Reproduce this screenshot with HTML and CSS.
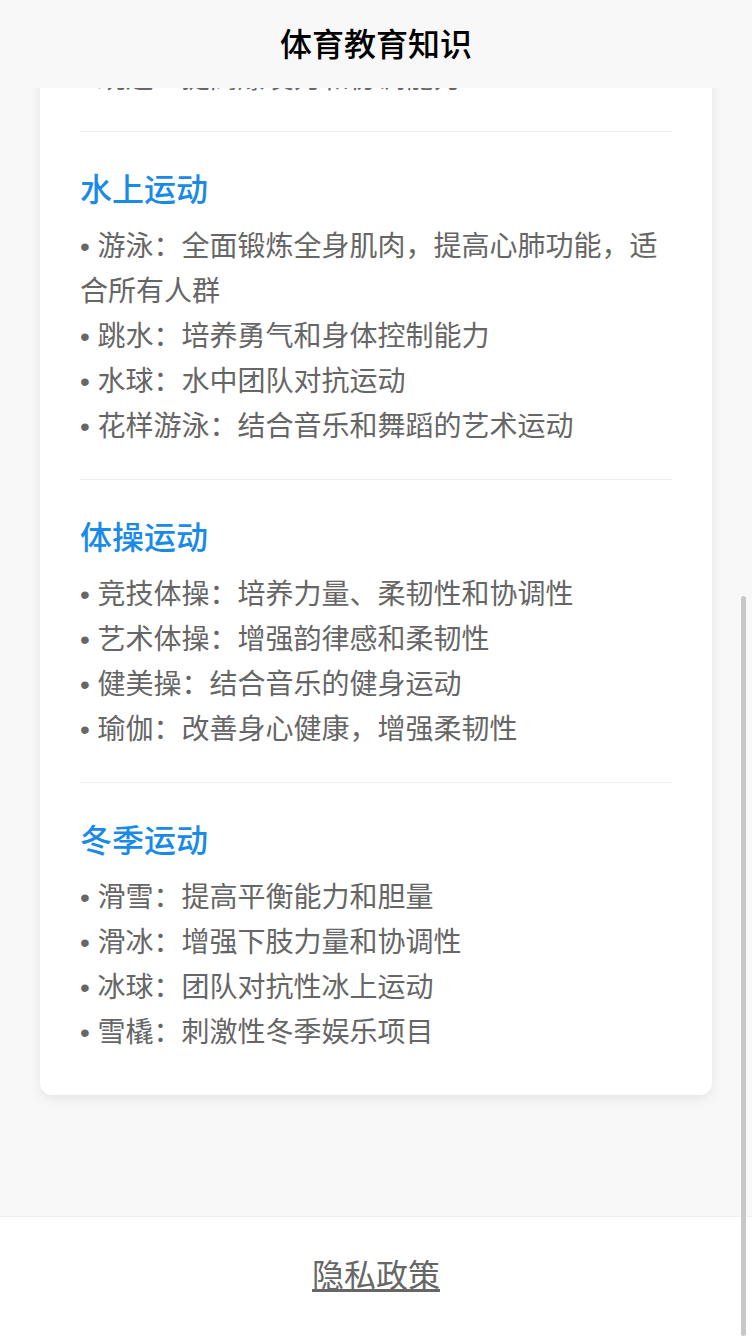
FILE: index.html
```html
<!DOCTYPE html>
<html lang="zh-CN">
<head>
  <meta charset="UTF-8">
  <meta name="viewport" content="width=device-width, initial-scale=1.0">
  <title>体育教育知识</title>
  <link rel="stylesheet" href="styles.css">
</head>
<body>

<div class="header">
  <h1>体育教育知识</h1>
</div>

<div class="main">
  <div class="card">
    <div class="section">
      <h3>球类运动</h3>
      <p>• 篮球：提高身体协调性和团队合作能力</p>
      <p>• 足球：增强心肺功能，培养团队精神和拼搏意识</p>
      <p>• 排球：提高反应速度和弹跳能力</p>
      <p>• 乒乓球：锻炼手眼协调能力，提高反应速度和灵敏性</p>
      <p>• 羽毛球：提高身体灵活性和耐力</p>
    </div>

    <div class="section">
      <h3>武术运动</h3>
      <p>• 太极拳：调节身心，增强平衡能力</p>
      <p>• 长拳：提高身体柔韧性和协调性</p>
      <p>• 散打：增强格斗技能和反应能力</p>
      <p>• 剑术：培养专注力和身体控制能力</p>
    </div>

    <div class="section">
      <h3>田径运动</h3>
      <p>• 短跑：提高速度和爆发力</p>
      <p>• 长跑：增强耐力和心肺功能，锻炼坚强的意志品质</p>
      <p>• 跳高：提高弹跳能力和身体协调性</p>
      <p>• 跳远：提高爆发力和协调能力</p>
    </div>

    <div class="section">
      <h3>水上运动</h3>
      <p>• 游泳：全面锻炼全身肌肉，提高心肺功能，适合所有人群</p>
      <p>• 跳水：培养勇气和身体控制能力</p>
      <p>• 水球：水中团队对抗运动</p>
      <p>• 花样游泳：结合音乐和舞蹈的艺术运动</p>
    </div>

    <div class="section">
      <h3>体操运动</h3>
      <p>• 竞技体操：培养力量、柔韧性和协调性</p>
      <p>• 艺术体操：增强韵律感和柔韧性</p>
      <p>• 健美操：结合音乐的健身运动</p>
      <p>• 瑜伽：改善身心健康，增强柔韧性</p>
    </div>

    <div class="section">
      <h3>冬季运动</h3>
      <p>• 滑雪：提高平衡能力和胆量</p>
      <p>• 滑冰：增强下肢力量和协调性</p>
      <p>• 冰球：团队对抗性冰上运动</p>
      <p>• 雪橇：刺激性冬季娱乐项目</p>
    </div>
  </div>
</div>

<div class="footer">
  <a href="#">隐私政策</a>
</div>

<div class="scroll-thumb" id="scroll-thumb"></div>

<script>
  function updateThumb() {
    const total = document.documentElement.scrollHeight;
    const view = window.innerHeight;
    const thumb = document.getElementById('scroll-thumb');
    const height = view * view / total;
    const top = total > view ? (view - height) * window.scrollY / (total - view) : 0;
    thumb.style.height = height + 'px';
    thumb.style.top = top + 'px';
  }

  function scrollToBottom() {
    window.scrollTo(0, document.documentElement.scrollHeight);
    updateThumb();
  }

  window.addEventListener('scroll', updateThumb);
  window.addEventListener('load', scrollToBottom);
  scrollToBottom();
</script>

</body>
</html>
```

FILE: styles.css
```css
* {
  margin: 0;
  padding: 0;
  box-sizing: border-box;
  font-family: "Liberation Sans", "Noto Sans CJK SC", sans-serif;
}

html {
  scrollbar-width: none;
}

html::-webkit-scrollbar {
  display: none;
}

body {
  background-color: #f8f8f8;
  padding-top: 88px;
}

.header {
  position: fixed;
  top: 0;
  left: 0;
  right: 0;
  height: 88px;
  padding-bottom: 4px;
  background-color: #f8f8f8;
  display: flex;
  justify-content: center;
  align-items: center;
  z-index: 10;
}

.header h1 {
  font-size: 32px;
  font-weight: 500;
  color: #000;
}

.main {
  padding: 20px 40px 121px;
}

.card {
  background-color: #ffffff;
  padding: 40px;
  border-radius: 12px;
  box-shadow: 0px 4px 12px rgba(0, 0, 0, 0.08);
}

.section {
  padding-bottom: 30px;
  margin-bottom: 30px;
  border-bottom: 1px solid #eee;
}

.section:last-child {
  padding-bottom: 0;
  margin-bottom: 0;
  border-bottom: none;
}

.section h3 {
  font-size: 32px;
  font-weight: 500;
  line-height: 56px;
  margin-bottom: 6px;
  color: #1a8ae8;
}

.section p {
  font-size: 28px;
  line-height: 45px;
  color: #666;
}

.footer {
  height: 120px;
  padding-bottom: 8px;
  background-color: #fff;
  border-top: 1px solid #eee;
  display: flex;
  justify-content: center;
  align-items: center;
}

.footer a {
  font-size: 32px;
  color: #666;
  text-decoration: underline;
}

.scroll-thumb {
  position: fixed;
  right: 6px;
  width: 5px;
  background-color: #c8c8c8;
  border-radius: 3px;
  z-index: 20;
}
```
